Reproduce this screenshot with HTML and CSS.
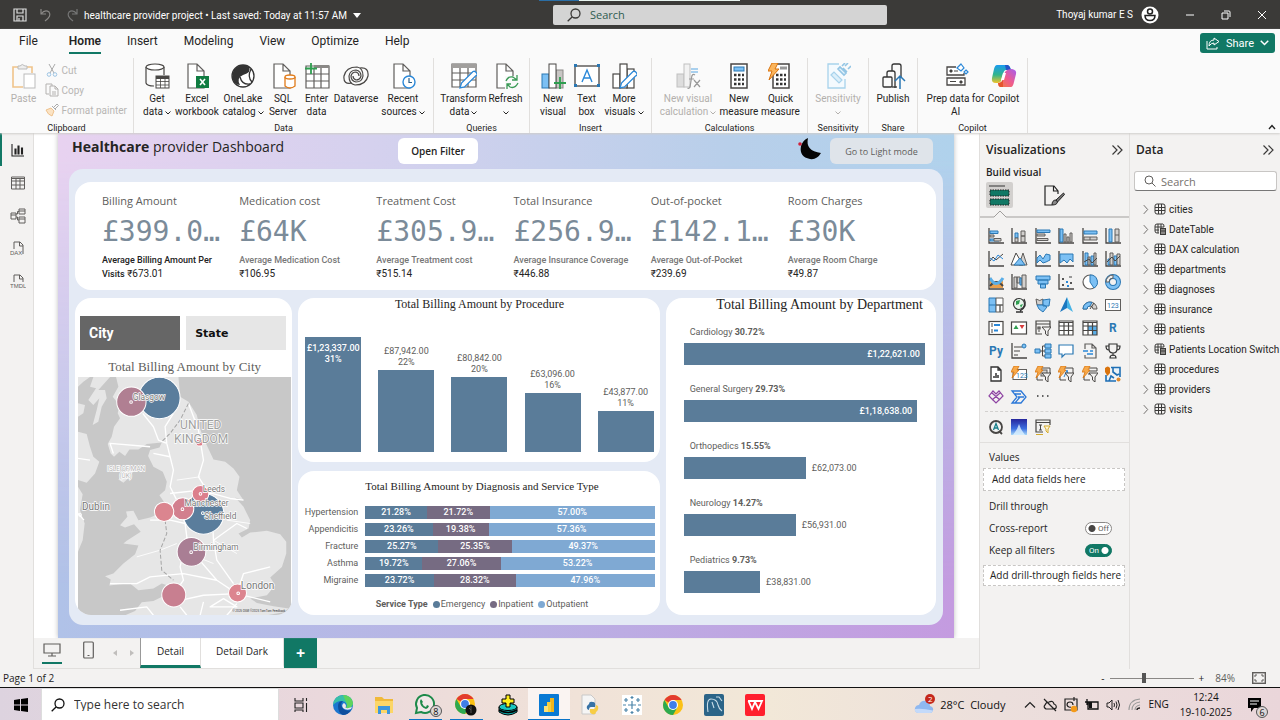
FILE: index.html
```html
<!DOCTYPE html>
<html lang="en">
<head>
<meta charset="utf-8">
<meta name="viewport" content="width=device-width, initial-scale=1">
<title>healthcare provider project</title>
<link rel="stylesheet" href="styles.css">
</head>
<body>
<svg class="defs" aria-hidden="true">
  <defs>
    <symbol id="ax" viewBox="0 0 16 16"><path d="M1 0V15H16" fill="none" stroke="#484644" stroke-width="1.3"/></symbol>
    <symbol id="bolt" viewBox="0 0 16 16"><path d="M3 0H8L6 4H8L1 12L3 6H0Z" fill="#f7a94a" stroke="#d9730d" stroke-width=".8"/></symbol>
    <symbol id="fun" viewBox="0 0 16 16"><path d="M7 7H16L13 11V16L10.500 14V11Z" fill="#f3f2f1" stroke="#484644"/></symbol>
    <symbol id="tbl" viewBox="0 0 12 12"><g fill="none" stroke="#3b3a39" stroke-width="1"><rect x="1" y="1" width="10" height="10" rx="2"/><path d="M4.500 1V11M7.500 1V11M1 4.500H11M1 7.500H11"/></g></symbol>
    <symbol id="tblc" viewBox="0 0 12 12"><g fill="none" stroke="#3b3a39" stroke-width="1"><path d="M5 10H3Q1 10 1 8V3Q1 1 3 1H9Q10 1 10 4M4 1V10M7 1V5M1 4H10M1 7H5"/><rect x="6.500" y="5.500" width="5" height="6" fill="#8a8886"/><path d="M6 8H12"/></g></symbol>
    <symbol id="chev" viewBox="0 0 8 12"><path d="M2 1L6.500 6L2 11" fill="none" stroke="#605e5c"/></symbol>
    <symbol id="dn" viewBox="0 0 6 4"><path d="M.5.5L3 3L5.500.5" fill="none" stroke="currentColor" stroke-width="1"/></symbol>
    <symbol id="dbl" viewBox="0 0 12 10"><path d="M1.500.5L6 5L1.500 9.500M6.500.5L11 5L6.500 9.500" fill="none" stroke="#3b3a39" stroke-width="1.200"/></symbol>
    <symbol id="mag" viewBox="0 0 14 14"><g fill="none" stroke="currentColor" stroke-width="1.300"><circle cx="8.500" cy="5.500" r="4.500"/><path d="M5.300 8.700L.7 13.300"/></g></symbol>
    <symbol id="doc" viewBox="0 0 26 26"><path d="M4 1H13L20 8V25H4ZM13 1V8H20" fill="#fff" stroke="#605e5c" stroke-width="1.200"/></symbol>
    <symbol id="pen" viewBox="0 0 26 26"><path d="M9 25L10.500 20L22 8.500Q24 7.500 25.500 10T24.500 13L13.500 24Z" fill="#fff" stroke="#2b88d8" stroke-width="1.300"/></symbol>
    <symbol id="chrome" viewBox="0 0 20 20"><circle cx="10" cy="10" r="10" fill="#fbc116"/><path d="M10 10L1.400 5A10 10 0 0 1 18.660 5L10 5Z" fill="#e33b2e"/><path d="M1.340 5A10 10 0 0 0 10 20L14.300 12.500L10 14L5.700 12.500Z" fill="#2da94f"/><circle cx="10" cy="10" r="5" fill="#fff"/><circle cx="10" cy="10" r="3.900" fill="#3f7ee8"/></symbol>
  </defs>
</svg>

<header class="titlebar">
  <div class="quick">
    <button aria-label="Save"><svg width="14" height="14" viewBox="0 0 14 14"><path d="M1 1H13V13H1ZM4 1V5H10V1M4 13V8H10V13M6 10V13" fill="none" stroke="#ddd" stroke-width="1.200"/></svg></button>
    <button aria-label="Undo"><svg width="14" height="14" viewBox="0 0 14 14"><path d="M2 1V6H7M2 6Q6 1 10 4Q13 8 6 13" fill="none" stroke="#8a8886" stroke-width="1.200"/></svg></button>
    <button aria-label="Redo"><svg width="14" height="14" viewBox="0 0 14 14"><path d="M12 1V6H7M12 6Q8 1 4 4Q1 8 8 13" fill="none" stroke="#777" stroke-width="1.200"/></svg></button>
    <button class="filename">healthcare provider project • Last saved: Today at 11:57 AM<svg width="8" height="5" viewBox="0 0 8 5"><path d="M0 0H8L4 5Z" fill="#fff"/></svg></button>
  </div>
  <label class="topsearch"><svg width="14" height="14"><use href="#mag"/></svg><input type="text" placeholder="Search" aria-label="Search"></label>
  <div class="account">
    <span>Thoyaj kumar E S</span>
    <svg width="18" height="18" viewBox="0 0 18 18"><circle cx="9" cy="9" r="8.500" fill="#fff"/><circle cx="9" cy="5.500" r="2.500" fill="none" stroke="#222" stroke-width="1.500"/><path d="M4 9.500H14Q14 14.500 9 14.500T4 9.500Z" fill="none" stroke="#222" stroke-width="1.500"/></svg>
    <button aria-label="Minimize"><svg width="10" height="10" viewBox="0 0 10 10"><path d="M1 5H9" stroke="#fff"/></svg></button>
    <button aria-label="Restore"><svg width="10" height="10" viewBox="0 0 10 10"><path d="M1 3H7V9H1ZM3 1H8Q9 1 9 2V7" fill="none" stroke="#fff"/></svg></button>
    <button aria-label="Close"><svg width="10" height="10" viewBox="0 0 10 10"><path d="M1 1L9 9M9 1L1 9" stroke="#fff"/></svg></button>
  </div>
  <i class="strip"></i>
</header>

<section class="ribbon">
  <nav class="tabs">
    <button class="t-file">File</button><button class="on">Home</button><button>Insert</button><button>Modeling</button><button>View</button><button>Optimize</button><button>Help</button>
    <button class="share"><svg width="14" height="13" viewBox="0 0 14 13"><path d="M1 4V12H11V10M8 1L13 4.500L8 8V6Q5 6 3 9Q3 3 8 3Z" fill="none" stroke="#fff"/></svg>Share<svg width="9" height="6"><use href="#dn"/></svg></button>
  </nav>
  <div class="groups">
    <div class="group g-clip">
      <div class="tools">
        <button class="tool off"><svg width="26" height="26" viewBox="0 0 26 26"><path d="M12 24H2V4H8M16 4H21V10" fill="none" stroke="#f0c48a" stroke-width="1.600"/><path d="M7 3H9Q11 0 14 3H16V6H7Z" fill="#eee" stroke="#bbb"/><rect x="13" y="11" width="11" height="14" fill="#fff" stroke="#bbb"/></svg><span>Paste</span></button>
        <div class="stack">
          <button><svg width="14" height="14" viewBox="0 0 14 14"><path d="M4 1L9 10M10 1L5 10" stroke="#aaa"/><circle cx="4" cy="11.500" r="1.800" fill="none" stroke="#9cc4e4"/><circle cx="10" cy="11.500" r="1.800" fill="none" stroke="#9cc4e4"/></svg>Cut</button>
          <button><svg width="14" height="14" viewBox="0 0 14 14"><path d="M4 11H1V1H7V3M5 3H10L13 6V13H5ZM10 3V6H13M7 9H11M7 11H11" fill="none" stroke="#b4b2b0"/></svg>Copy</button>
          <button><svg width="14" height="14" viewBox="0 0 14 14"><path d="M1 7L6 5L9 8L7 13Q3 12 1 7Z" fill="#fbe3c4" stroke="#eec28e"/><path d="M7 3L11 7M9 4L12 1L13.500 2.500L10 6" fill="none" stroke="#aaa"/></svg>Format painter</button>
        </div>
      </div>
      <p>Clipboard</p>
    </div>
    <div class="group g-data">
      <div class="tools">
        <button class="tool"><svg width="26" height="26" viewBox="0 0 26 26"><path d="M2 4V20Q3 23 10 23M20 4V12" fill="none" stroke="#484644" stroke-width="1.200"/><ellipse cx="11" cy="4" rx="9" ry="3" fill="#fff" stroke="#484644" stroke-width="1.200"/><rect x="12" y="13" width="13" height="12" fill="#fff" stroke="#484644"/><path d="M12 14.500H25" stroke="#484644" stroke-width="3"/><path d="M12 18.500H25M12 22H25M16.500 16V25M21 16V25" stroke="#484644" stroke-width=".8"/></svg><span>Get</span><span>data<svg><use href="#dn"/></svg></span></button>
        <button class="tool"><svg width="26" height="26" viewBox="0 0 26 26"><use href="#doc"/><rect x="12" y="13" width="13" height="12" fill="#107c41"/><path d="M16 16L21 22M21 16L16 22" stroke="#fff" stroke-width="1.600"/></svg><span>Excel</span><span>workbook</span></button>
        <button class="tool"><svg width="26" height="26" viewBox="0 0 26 26"><circle cx="13" cy="13" r="11" fill="#fff" stroke="#333" stroke-width="1.300"/><path d="M13 2Q3 3 2 14Q4 22 10 22Q6 15 13 12Q22 9 19 4Q16 2 13 2Z" fill="#333"/><path d="M10 14Q12 22 20 21M21 6Q17 14 22 19" fill="none" stroke="#333" stroke-width="1.300"/></svg><span>OneLake</span><span>catalog<svg><use href="#dn"/></svg></span></button>
        <button class="tool"><svg width="26" height="26" viewBox="0 0 26 26"><use href="#doc"/><path d="M15 14V23Q20 27 25 23V14" fill="#fff" stroke="#e07b1a" stroke-width="1.300"/><ellipse cx="20" cy="14" rx="5" ry="2" fill="#fff" stroke="#e07b1a" stroke-width="1.300"/></svg><span>SQL</span><span>Server</span></button>
        <button class="tool"><svg width="26" height="26" viewBox="0 0 26 26"><path d="M2 3H25V25H2ZM2 11H25M2 18H25M10 5V25M17 5V25" fill="#fff" stroke="#605e5c" stroke-width="1.200"/><path d="M10 3.500H25" stroke="#8a8886" stroke-width="3"/><path d="M7 0V11M1 5.500H13" stroke="#2f9e50" stroke-width="1.800"/></svg><span>Enter</span><span>data</span></button>
        <button class="tool"><svg width="26" height="26" viewBox="0 0 26 26"><g fill="none" stroke="#484644" stroke-width="1.200"><path d="M9 20Q0 22 1 13Q3 4 14 4Q20 5 20 13Q19 19 13 19Q8 18 8 13Q9 9 13 9Q16 10 16 13"/><path d="M17 5Q26 4 25 13Q23 22 12 22Q6 21 6 13Q7 7 13 7Q18 8 18 13Q17 17 13 17Q10 16 10 13"/></g></svg><span>Dataverse</span></button>
        <button class="tool"><svg width="26" height="26" viewBox="0 0 26 26"><use href="#doc"/><circle cx="19" cy="19" r="6" fill="#fff" stroke="#2b88d8" stroke-width="1.400"/><path d="M19 15V19.500H22" fill="none" stroke="#2b5f88" stroke-width="1.200"/></svg><span>Recent</span><span>sources<svg><use href="#dn"/></svg></span></button>
      </div>
      <p>Data</p>
    </div>
    <div class="group g-query">
      <div class="tools">
        <button class="tool"><svg width="26" height="26" viewBox="0 0 26 26"><path d="M1 1H25V24H1ZM1 10H25M1 17H25M9 5V24M17 5V24" fill="#fff" stroke="#605e5c" stroke-width="1.200"/><path d="M1 3H25" stroke="#a19f9d" stroke-width="4"/><use href="#pen"/></svg><span>Transform</span><span>data<svg><use href="#dn"/></svg></span></button>
        <button class="tool"><svg width="26" height="26" viewBox="0 0 26 26"><use href="#doc"/><rect x="12" y="13" width="14" height="13" fill="#fafafa"/><path d="M13 18Q15 13 20 14L24 17M24 12V17H19M25 20Q22 26 17 24L14 21M14 26V21H18" fill="none" stroke="#3a9a56" stroke-width="1.300"/></svg><span>Refresh</span><span><svg><use href="#dn"/></svg></span></button>
      </div>
      <p>Queries</p>
    </div>
    <div class="group g-insert">
      <div class="tools">
        <button class="tool"><svg width="26" height="26" viewBox="0 0 26 26"><rect x="2" y="11" width="7" height="14" fill="#7cc0f4" stroke="#2b78b4"/><rect x="16" y="7" width="7" height="18" fill="#c8c6c4" stroke="#8a8886"/><rect x="9" y="1" width="7" height="24" fill="#fff" stroke="#484644"/><path d="M20 14V26M14 20H26" stroke="#2f9e50" stroke-width="1.800"/></svg><span>New</span><span>visual</span></button>
        <button class="tool"><svg width="26" height="26" viewBox="0 0 26 26"><rect x="1" y="3" width="24" height="20" fill="#fff" stroke="#605e5c" stroke-width="1.500"/><path d="M8 19L13 7L18 19M10 15H16" fill="none" stroke="#2b88d8" stroke-width="1.400"/><path d="M0 1H3V4H0ZM23 1H26V4H23ZM0 21H3V24H0ZM23 21H26V24H23Z" fill="#2b78b4"/></svg><span>Text</span><span>box</span></button>
        <button class="tool"><svg width="26" height="26" viewBox="0 0 26 26"><g fill="#fff" stroke="#484644" stroke-width="1.200"><rect x="2" y="11" width="7" height="14"/><rect x="16" y="6" width="7" height="19"/><rect x="9" y="1" width="7" height="24"/></g><use href="#pen"/></svg><span>More</span><span>visuals<svg><use href="#dn"/></svg></span></button>
      </div>
      <p>Insert</p>
    </div>
    <div class="group g-calc">
      <div class="tools">
        <button class="tool off"><svg width="26" height="26" viewBox="0 0 26 26"><rect x="2" y="11" width="7" height="13" fill="#ddd" stroke="#c0c0c0"/><rect x="9" y="1" width="6" height="23" fill="#f2f2f2" stroke="#c0c0c0"/><path d="M16 6H23M16 9H23" stroke="#a9d0ee" stroke-width="2"/><path d="M20 12Q17 10 16.500 15L15 24Q14 26 12.500 25M14 16H19M19 17L25 24M25 17L19 24" fill="none" stroke="#999" stroke-width="1.200"/></svg><span>New visual</span><span>calculation<svg><use href="#dn"/></svg></span></button>
        <button class="tool"><svg width="26" height="26" viewBox="0 0 26 26"><rect x="5" y="1" width="16" height="24" fill="#fff" stroke="#484644" stroke-width="1.500"/><rect x="8" y="4" width="10" height="4" fill="#7cc0f4" stroke="#2b78b4"/><path d="M8 12H18M8 16.500H18M8 21H18" stroke="#333" stroke-width="2.500" stroke-dasharray="2.500 1.500"/></svg><span>New</span><span>measure</span></button>
        <button class="tool"><svg width="26" height="26" viewBox="0 0 26 26"><rect x="5" y="1" width="16" height="24" fill="#fff" stroke="#484644" stroke-width="1.500"/><path d="M12 5H19" stroke="#999" stroke-width="3"/><path d="M8 12H18M8 16.500H18M8 21H18" stroke="#333" stroke-width="2.500" stroke-dasharray="2.500 1.500"/><path d="M4 0H10L7 6H11L1 17L4 8H0Z" fill="#fbb55c" stroke="#d9730d"/></svg><span>Quick</span><span>measure</span></button>
      </div>
      <p>Calculations</p>
    </div>
    <div class="group g-sens">
      <div class="tools">
        <button class="tool off"><svg width="26" height="26" viewBox="0 0 26 26"><path d="M14 1H3V25H20V16" fill="#f4fafe" stroke="#a8d3ec" stroke-width="1.300"/><path d="M6 12L9 9L17 17L14 20Z" fill="#dceffa" stroke="#a8d3ec" stroke-width="1.200"/><path d="M13 6L19 12L21 10L15 4ZM18 5L22 9M20 3L23 0M23 6L26 3M17 3L20 0" fill="#e4f2fb" stroke="#93c5e4" stroke-width="1.600"/></svg><span>Sensitivity</span><span><svg><use href="#dn"/></svg></span></button>
      </div>
      <p>Sensitivity</p>
    </div>
    <div class="group g-share">
      <div class="tools">
        <button class="tool"><svg width="26" height="26" viewBox="0 0 26 26"><g fill="#fafafa" stroke="#333" stroke-width="1.300"><path d="M12 8V3Q12 1 14 1H19Q21 1 21 3V14M7 14V10Q7 8 9 8H13Q15 8 15 10V25"/><rect x="3" y="14" width="9" height="10" rx="1"/><path d="M12 24H17"/></g><path d="M20 26V13M15 18L20 13L25 18" fill="none" stroke="#2b78b4" stroke-width="1.500"/></svg><span>Publish</span></button>
      </div>
      <p>Share</p>
    </div>
    <div class="group g-cop">
      <div class="tools">
        <button class="tool"><svg width="26" height="26" viewBox="0 0 26 26"><path d="M13 4H4V12H21V10M4 15H22V22H4Z" fill="#fff" stroke="#484644" stroke-width="1.300"/><path d="M7 7H9V9H7ZM17 18H19V20H17ZM11 8H15M7 18.500H13" fill="#333" stroke="#484644"/><path d="M18 1L21 5L18 8L14 5ZM23 7L25 9L23 11L21 9Z" fill="#fff" stroke="#2b88d8" stroke-width="1.200"/></svg><span>Prep data for</span><span>AI</span></button>
        <button class="tool"><svg width="26" height="26" viewBox="0 0 26 26"><defs><linearGradient id="cpa" x1="0" y1="0" x2="0" y2="1"><stop offset="0" stop-color="#1a9bf0"/><stop offset=".55" stop-color="#32b58a"/><stop offset="1" stop-color="#f0c429"/></linearGradient><linearGradient id="cpb" x1="1" y1="0" x2="0" y2="1"><stop offset="0" stop-color="#a45cf0"/><stop offset=".5" stop-color="#ee5b8e"/><stop offset="1" stop-color="#f5813a"/></linearGradient></defs><path d="M6 2H17Q19 3 20 7L15 7Q13 7 12 11L10 18Q9 20 5 20Q0 20 1 15L3 6Q4 2 6 2Z" fill="url(#cpa)"/><path d="M14 2H17Q19 3 20 7H15Z" fill="#2555c8"/><path d="M20 24H9Q7 22 7 20Q11 20 12 16L14 9Q16 6 21 6Q26 7 25 11L23 19Q22 24 20 24Z" fill="url(#cpb)"/><path d="M7 20Q11 20 12 16L12 24H9Q7 23 7 20Z" fill="#e4552e"/><path d="M12 10H15L13 17H10Z" fill="#fff"/></svg><span>Copilot</span></button>
      </div>
      <p>Copilot</p>
    </div>
    <button class="collapse" aria-label="Collapse ribbon"><svg width="8" height="6" viewBox="0 0 8 6"><path d="M1 5L4 1.500L7 5" fill="none" stroke="#222" stroke-width="1.400"/></svg></button>
  </div>
</section>

<main class="work">
  <nav class="rail">
    <button class="on" aria-label="Report view"><svg width="14" height="14" viewBox="0 0 14 14"><path d="M1 1V13H13M4 11V6H5V11ZM7 11V3H8V11ZM10.500 11V5H11.500V11Z" fill="none" stroke="#222" stroke-width="1.100"/></svg></button>
    <button aria-label="Table view"><svg width="14" height="14" viewBox="0 0 14 14"><path d="M.5 1H13.500V13H.5ZM.5 5H13.500M.5 9H13.500M5 3V13M9 3V13M1 2.500H13" fill="none" stroke="#605e5c"/></svg></button>
    <button aria-label="Model view"><svg width="16" height="16" viewBox="0 0 16 16"><path d="M1 5H6V11H1ZM9 1H15V6H9ZM9 9H15V15H9ZM1 7H6M9 3H15M9 11H15M6 6H7.500V3.500H9M6 9H7.500V12H9" fill="none" stroke="#605e5c"/></svg></button>
    <button aria-label="DAX query view"><svg width="16" height="18" viewBox="0 0 16 18"><path d="M4 9V2H10L13 5V14M9.500 2V6H13" fill="none" stroke="#605e5c"/><text x="0" y="15" class="mini">DAX</text></svg></button>
    <button aria-label="TMDL view"><svg width="16" height="18" viewBox="0 0 16 18"><path d="M4 9V2H10L13 5V9M9.500 2V6H13" fill="none" stroke="#605e5c"/><text x="0" y="15" class="mini">TMDL</text></svg></button>
  </nav>

  <section class="canvas">
    <div class="page">
      <div class="pagehead">
        <h1><b>Healthcare</b> provider Dashboard</h1>
        <button class="openf">Open Filter</button>
        <svg class="moon" width="24" height="22" viewBox="0 0 24 22"><path d="M10 0Q7 13 23 15Q19 22 12 21Q1 19 3 8Q5 2 10 0Z" fill="#050505"/><circle cx="2" cy="6" r="1.800" fill="#d0203a"/></svg>
        <button class="light">Go to Light mode</button>
      </div>
      <div class="panel">
        <section class="card kpis">
          <div class="strong"><h2>Billing Amount</h2><output>£399.0…</output><p><b>Average Billing Amount Per</b></p><p><b>Visits</b> ₹673.01</p></div>
          <div><h2>Medication cost</h2><output>£64K</output><p><b>Average Medication Cost</b></p><p>₹106.95</p></div>
          <div><h2>Treatment Cost</h2><output>£305.9…</output><p><b>Average Treatment cost</b></p><p>₹515.14</p></div>
          <div><h2>Total Insurance</h2><output>£256.9…</output><p><b>Average Insurance Coverage</b></p><p>₹446.88</p></div>
          <div><h2>Out-of-pocket</h2><output>£142.1…</output><p><b>Average Out-of-Pocket</b></p><p>₹239.69</p></div>
          <div><h2>Room Charges</h2><output>£30K</output><p><b>Average Room Charge</b></p><p>₹49.87</p></div>
        </section>
        <section class="card mapcard">
          <div class="switch"><button class="city">City</button><button class="state">State</button></div>
          <h3>Total Billing Amount by City</h3>
          <svg class="map" viewBox="24 261 639 714" preserveAspectRatio="xMidYMid slice" role="img" aria-label="Map of billing by city">
            <rect x="24" y="261" width="639" height="714" fill="#c8c8c8"/>
            <g fill="#e6e6e6">
              <path d="M138 261L145 290L128 320L148 345L143 370L150 385L132 410L125 440L113 462L122 490L132 500L148 485L165 498L178 478L205 478L230 462L275 457L268 472L240 480L234 498L250 530L278 545L290 575L285 600L268 615L285 640L275 668L240 682L205 690L190 662L168 664L172 680L150 705L165 712L192 702L212 725L170 752L160 760L205 766L195 792L160 820L130 850L105 858L122 868L118 886L150 882L180 880L205 900L250 895L275 880L300 888L285 915L250 932L215 936L195 962L165 975H590L640 966L655 955L610 948L560 938L540 925L590 915L615 885L600 862L635 830L648 790L648 755L630 732L590 722L540 727L515 742L505 730L535 715L540 690L520 650L495 622L520 630L500 600L508 560L490 535L465 515L430 508L412 470L398 440L388 410L380 375L355 335L330 320L325 261Z"/>
              <path d="M24 425L50 432L60 470L70 500L88 515L75 550L50 578L24 570ZM24 590L38 612L30 660L44 700L38 750L24 785ZM145 568L165 545L198 530L180 560L160 578ZM85 300L120 261H70L60 290L78 295L55 330L70 345L88 325L80 360L68 405L85 395L95 350L110 325L105 300ZM24 340L45 345L40 370L24 380ZM24 261H60L40 275L24 290Z"/>
            </g>
            <g fill="none" stroke="#fff" stroke-width="4" stroke-linejoin="round">
              <path d="M218 370L250 410L265 450L290 460L300 500L310 540L300 590L320 630L345 700L350 740L380 800L440 870L500 910M290 460L285 410L310 370M355 340L385 420L400 510L385 560L410 600L425 650L430 750L440 810L490 880M300 610L390 600L480 625L520 630M345 700L300 690L240 690M350 740L330 830L340 870L320 900M310 935L400 915L500 910L600 935M340 850L440 870M330 950L350 975M400 935L390 975M500 940L470 975M500 910L520 850L600 830M430 750L500 700L530 715M130 490L120 460L240 470M120 880L200 880L240 860L340 850M24 505L60 510M24 670L42 690M250 490L300 500M150 960L230 950L250 975M460 925L420 950L500 950Z"/>
              <path d="M320 570L390 560M470 690L540 700M430 750L500 790M200 800L270 780L320 760M380 800L430 820" stroke-width="2.500"/>
            </g>
            <path d="M355 340L330 390L300 430L275 455M285 690L290 730L270 780L275 840L310 870" fill="none" stroke="#a5a5a5" stroke-width="3" stroke-dasharray="12 6"/>
            <g stroke="#fff" stroke-width="3">
              <circle cx="268" cy="324" r="62" fill="#5a7d9c"/><circle cx="184" cy="335" r="44" fill="#b07f92"/>
              <circle cx="388" cy="457" r="11" fill="#dc7f88"/><circle cx="400" cy="671" r="61" fill="#5a7d9c"/>
              <circle cx="391" cy="611" r="25" fill="#dc7f8c"/><circle cx="338" cy="656" r="33" fill="#d27f8e"/><circle cx="282" cy="665" r="29" fill="#db858f"/>
              <circle cx="364" cy="785" r="43" fill="#a97e94"/><circle cx="311" cy="914" r="36" fill="#c87f90"/><circle cx="502" cy="908" r="27" fill="#dc858f"/>
            </g>
            <g fill="none" stroke="#fff" stroke-width="3"><circle cx="183" cy="336" r="4"/><circle cx="391" cy="611" r="4"/><circle cx="337" cy="657" r="4"/><circle cx="398" cy="669" r="4"/><circle cx="363" cy="786" r="4"/><circle cx="504" cy="909" r="4"/><circle cx="30" cy="674" r="4"/></g>
            <g class="places">
              <text x="188" y="329">Glasgow</text><text x="398" y="605">Leeds</text><text x="343" y="648">Manchester</text><text x="402" y="688">Sheffield</text><text x="370" y="778">Birmingham</text>
              <text x="512" y="897" class="big">London</text><text x="36" y="660" class="big">Dublin</text>
              <text x="330" y="417" class="uk">UNITED</text><text x="312" y="458" class="uk">KINGDOM</text>
              <text x="112" y="543" class="isle">ISLE OF MAN</text><text x="148" y="563" class="isle">(UK)</text>
              <text x="486" y="966" class="copy">© 2025 OSM ©2025 TomTom Feedback</text>
            </g>
          </svg>
        </section>
        <div class="middle">
          <section class="card proc">
            <h3>Total Billing Amount by Procedure</h3>
            <div class="cols">
              <div class="in"><i style="height:115px"><span>£1,23,337.00<br>31%</span></i></div>
              <div><span>£87,942.00<br>22%</span><i style="height:82px"></i></div>
              <div><span>£80,842.00<br>20%</span><i style="height:75px"></i></div>
              <div><span>£63,096.00<br>16%</span><i style="height:59px"></i></div>
              <div><span>£43,877.00<br>11%</span><i style="height:41px"></i></div>
            </div>
          </section>
          <section class="card diag">
            <h3>Total Billing Amount by Diagnosis and Service Type</h3>
            <div class="rows">
              <span>Hypertension</span><div><i class="e" style="width:21.28%">21.28%</i><i class="n" style="width:21.72%">21.72%</i><i class="o" style="width:57%">57.00%</i></div>
              <span>Appendicitis</span><div><i class="e" style="width:23.26%">23.26%</i><i class="n" style="width:19.38%">19.38%</i><i class="o" style="width:57.36%">57.36%</i></div>
              <span>Fracture</span><div><i class="e" style="width:25.27%">25.27%</i><i class="n" style="width:25.35%">25.35%</i><i class="o" style="width:49.37%">49.37%</i></div>
              <span>Asthma</span><div><i class="e" style="width:19.72%">19.72%</i><i class="n" style="width:27.06%">27.06%</i><i class="o" style="width:53.22%">53.22%</i></div>
              <span>Migraine</span><div><i class="e" style="width:23.72%">23.72%</i><i class="n" style="width:28.32%">28.32%</i><i class="o" style="width:47.96%">47.96%</i></div>
            </div>
            <div class="legend"><b>Service Type</b><span><i class="e"></i>Emergency</span><span><i class="n"></i>Inpatient</span><span><i class="o"></i>Outpatient</span></div>
          </section>
        </div>
        <section class="card dept">
          <h3>Total Billing Amount by Department</h3>
          <div class="drow"><p>Cardiology <b>30.72%</b></p><div><i style="width:100%">£1,22,621.00</i></div></div>
          <div class="drow"><p>General Surgery <b>29.73%</b></p><div><i style="width:96.75%">£1,18,638.00</i></div></div>
          <div class="drow"><p>Orthopedics <b>15.55%</b></p><div><i style="width:50.62%"></i><span>£62,073.00</span></div></div>
          <div class="drow"><p>Neurology <b>14.27%</b></p><div><i style="width:46.43%"></i><span>£56,931.00</span></div></div>
          <div class="drow"><p>Pediatrics <b>9.73%</b></p><div><i style="width:31.67%"></i><span>£38,831.00</span></div></div>
        </section>
      </div>
    </div>
    <div class="sheets">
      <button class="view on" aria-label="Desktop layout"><svg width="18" height="14" viewBox="0 0 18 14"><path d="M1 1H17V10H1ZM9 10V13M5 13H13" fill="none" stroke="#605e5c" stroke-width="1.200"/></svg></button>
      <button class="view" aria-label="Mobile layout"><svg width="11" height="18" viewBox="0 0 11 18"><rect x=".7" y="1" width="9.600" height="16" rx="1" fill="none" stroke="#605e5c" stroke-width="1.200"/><path d="M4.500 14.500H6.500" stroke="#605e5c"/></svg></button>
      <button class="nudge" aria-label="Previous page"><svg width="4" height="6" viewBox="0 0 4 6"><path d="M4 0V6L0 3Z" fill="#c0bebc"/></svg></button>
      <button class="nudge" aria-label="Next page"><svg width="4" height="6" viewBox="0 0 4 6"><path d="M0 0V6L4 3Z" fill="#c0bebc"/></svg></button>
      <button class="sheet on">Detail</button><button class="sheet wide">Detail Dark</button><button class="add">+</button>
    </div>
  </section>

  <aside class="viz">
    <div class="phead"><h2>Visualizations</h2><button aria-label="Collapse"><svg width="12" height="10"><use href="#dbl"/></svg></button></div>
    <p class="build">Build visual</p>
    <div class="modes">
      <button class="on" aria-label="Build visual"><svg width="21" height="21" viewBox="0 0 21 21"><path d="M0 1H16" stroke="#333"/><path d="M1 5H20V11H1ZM1 14H20V20H1Z" fill="#117865" stroke="#222" stroke-dasharray="1.500 1"/></svg></button>
      <button aria-label="Format visual"><svg width="22" height="21" viewBox="0 0 22 21"><path d="M8 20H1V1H10L14 6V9M9.500 1V6H14" fill="none" stroke="#222" stroke-width="1.200"/><path d="M19.500 8L12 15L13.500 17L20.500 9.500Z" fill="#777" stroke="#222"/><path d="M12 15Q8 15 8 20Q13 20 13.500 17Z" fill="#888" stroke="#222"/></svg></button>
    </div>
    <svg class="notch" width="100%" height="8"><path d="M0 7H14L20 1L26 7H400" fill="none" stroke="#a19f9d"/></svg>
    <div class="vgrid">
      <button aria-label="Stacked bar chart"><svg viewBox="0 0 16 16"><use href="#ax"/><path d="M2 3H10V5.500H2ZM2 11H11V13H2Z" class="b"/><path d="M2 7H6V9H2ZM6 10.500H13V13H6Z" class="g"/></svg></button>
      <button aria-label="Stacked column chart"><svg viewBox="0 0 16 16"><use href="#ax"/><path d="M4 5H7V10H4Z" class="b"/><path d="M4 10H7V14H4ZM10 8H14V14H10ZM10 3H14V8H10Z" class="g"/></svg></button>
      <button aria-label="Clustered bar chart"><svg viewBox="0 0 16 16"><use href="#ax"/><path d="M2 2H15V4.500H2Z" class="b"/><path d="M2 6H10V8H2ZM2 10.500H13V12.500H2Z" class="g"/></svg></button>
      <button aria-label="Clustered column chart"><svg viewBox="0 0 16 16"><use href="#ax"/><path d="M2 1H5V14H2Z" class="b"/><path d="M6 6H8V14H6ZM9 9H11V14H9ZM12 5H14V14H12Z" class="g"/></svg></button>
      <button aria-label="100% stacked bar chart"><svg viewBox="0 0 16 16"><use href="#ax"/><path d="M2 3H15V6H2Z" class="b"/><path d="M2 9H15V12H2ZM8 9V12" class="g"/></svg></button>
      <button aria-label="100% stacked column chart"><svg viewBox="0 0 16 16"><use href="#ax"/><path d="M4 1H7V14H4Z" class="b"/><path d="M10 1H14V14H10ZM10 7H14" class="g"/></svg></button>

      <button aria-label="Line chart"><svg viewBox="0 0 16 16"><use href="#ax"/><path d="M2 10L5 6L8 9L15 3" class="k"/><path d="M2 7L6 10L10 4L15 8" class="l"/></svg></button>
      <button aria-label="Area chart"><svg viewBox="0 0 16 16"><path d="M8 14L12 2L16 14Z" class="g"/><path d="M0 14L5 2L12 14Z" fill="#fff" stroke="#484644"/><path d="M3 14L9 7L14 14Z" class="b"/></svg></button>
      <button aria-label="Stacked area chart"><svg viewBox="0 0 16 16"><use href="#ax"/><path d="M2 7L5 4L8 8L11 3L15 4V9L11 11L8 12L5 9L2 12Z" class="b"/></svg></button>
      <button aria-label="100% area chart"><svg viewBox="0 0 16 16"><use href="#ax"/><path d="M2 3H15V11L12 8L9 12L6 9L2 12Z" class="b"/></svg></button>
      <button aria-label="Line and stacked column chart"><svg viewBox="0 0 16 16"><use href="#ax"/><path d="M3 2H6V14H3ZM9 5H12V14H9Z" class="b"/><path d="M6 6H8V14H6ZM12 2H14V14H12Z" class="g"/><path d="M2 11L7 8L10 12L15 7" class="k"/></svg></button>
      <button aria-label="Line and clustered column chart"><svg viewBox="0 0 16 16"><use href="#ax"/><path d="M3 8H6V14H3ZM9 5H12V14H9Z" class="b"/><path d="M5 2H8V14H5ZM12 3H15V14H12Z" class="g"/><path d="M2 11L7 6L10 10L15 5" class="k"/></svg></button>

      <button aria-label="Ribbon chart"><svg viewBox="0 0 16 16"><path d="M2 3Q8 15 15 4V14H2Z" fill="#e9a04e"/><path d="M2 12Q8 4 15 12" fill="none" stroke="#484644" stroke-width="2"/><path d="M2 4Q8 15 15 4" fill="none" stroke="#5aaee8" stroke-width="3"/><use href="#ax"/></svg></button>
      <button aria-label="Waterfall chart"><svg viewBox="0 0 16 16"><use href="#ax"/><path d="M3 3H6V14H3ZM6 3H9V9H6Z" class="g"/><path d="M9 4H11V11H9Z" class="b"/><path d="M11 1H15V14H11Z" class="g"/></svg></button>
      <button aria-label="Funnel"><svg viewBox="0 0 16 16"><path d="M1 2H15V6H1ZM3 6H13V10H3ZM5.500 10H10.500V14H5.500Z" class="b"/></svg></button>
      <button aria-label="Scatter chart"><svg viewBox="0 0 16 16"><use href="#ax"/><path d="M4 4H6V6H4ZM4 10H6V12H4ZM12 8H14V10H12Z" fill="#555"/><path d="M8 7H10V9H8ZM9 11H11V13H9Z" fill="#2b88d8"/><path d="M11 2H14V4H11Z" fill="#999"/></svg></button>
      <button aria-label="Pie chart"><svg viewBox="0 0 16 16"><circle cx="8" cy="8" r="7" fill="#fff" stroke="#605e5c" stroke-width="1.200"/><path d="M8 1A7 7 0 0 1 12 14L8 8Z" class="b"/></svg></button>
      <button aria-label="Donut chart"><svg viewBox="0 0 16 16"><circle cx="8" cy="8" r="5.500" fill="none" stroke="#2b78b4" stroke-width="5"/><circle cx="8" cy="8" r="5.500" fill="none" stroke="#7cc0f4" stroke-width="3"/><path d="M8 1A7 7 0 0 0 1 8H4A4 4 0 0 1 8 4Z" fill="#eee" stroke="#605e5c"/></svg></button>

      <button aria-label="Treemap"><svg viewBox="0 0 16 16"><path d="M1 1H8V15H1Z" class="b"/><path d="M8 1H15V8H8ZM8 8H12V15H8ZM12 8H15V15H12Z" fill="#fff" stroke="#605e5c"/><path d="M1 8H8" stroke="#2b78b4"/></svg></button>
      <button aria-label="Map"><svg viewBox="0 0 16 16"><circle cx="8" cy="7" r="5.500" fill="#eaf6ee" stroke="#333" stroke-width="1.200"/><path d="M5 4L9 3L8 7L5 8ZM9 8L12 7L10 11Z" fill="#2f9e50"/><path d="M13 2Q17 9 9 14M5 15H12" fill="none" stroke="#333" stroke-width="1.300"/></svg></button>
      <button aria-label="Filled map"><svg viewBox="0 0 16 16"><path d="M1 2Q5 5 8 2L8 8H2Z" class="g"/><path d="M8 3L15 2L14 9H8ZM2 8H9L12 10L8 15L4 12Z" class="b"/></svg></button>
      <button aria-label="Azure map"><svg viewBox="0 0 16 16"><path d="M9 0L2 15L9 11Z" fill="#1c78c0"/><path d="M9 0L15 15L9 11Z" fill="#47b4e6"/></svg></button>
      <button aria-label="Gauge"><svg viewBox="0 0 16 16"><path d="M1 12A7 7 0 0 1 15 12H11A3 3 0 0 0 5 12Z" class="g"/><path d="M1 12A7 7 0 0 1 10 5.300L8 9Q5 9 5 12Z" class="b"/><path d="M8 12L12 6" class="k"/></svg></button>
      <button aria-label="Card"><svg viewBox="0 0 16 16"><rect x=".5" y="2.500" width="15" height="11" fill="#fff" stroke="#605e5c"/><text x="2" y="11" class="num">123</text></svg></button>

      <button aria-label="Multi-row card"><svg viewBox="0 0 16 16"><rect x="1" y="1.500" width="14" height="13" fill="#fff" stroke="#484644" stroke-width="1.200"/><path d="M4 3V7M4 9V13" class="k"/><path d="M6 5H12M6 10.500H10" stroke="#2b88d8" stroke-width="2"/></svg></button>
      <button aria-label="KPI"><svg viewBox="0 0 16 16"><rect x=".5" y="2" width="15" height="12" fill="#fff" stroke="#484644" stroke-width="1.200"/><path d="M2.500 9L5 5L7.500 9Z" fill="#2f9e50"/><path d="M8.500 5H13.500L11 9Z" fill="#d83b3b"/></svg></button>
      <button aria-label="Slicer"><svg viewBox="0 0 16 16"><path d="M7 14H1V1H15V7M1 4H15M3 7H5V9H3ZM3 11H5" fill="none" stroke="#484644" stroke-width="1.200"/><use href="#fun"/></svg></button>
      <button aria-label="Table"><svg viewBox="0 0 16 16"><path d="M1 1H15V15H1ZM1 6H15M1 10.500H15M6 2V15M10.500 2V15M1 2.500H15" fill="#fff" stroke="#484644" stroke-width="1.200"/></svg></button>
      <button aria-label="Matrix"><svg viewBox="0 0 16 16"><rect x="1" y="1" width="14" height="14" fill="#fff"/><path d="M6 6H15V10H6ZM10 10H15V15H10Z" fill="#5aaee8"/><path d="M1 1H15V15H1ZM1 6H15M1 10.500H15M6 2V15M10.500 2V15M1 2.500H15" fill="none" stroke="#484644" stroke-width="1.200"/></svg></button>
      <button class="word" aria-label="R script visual">R</button>

      <button class="word" aria-label="Python visual">Py</button>
      <button aria-label="Key influencers"><svg viewBox="0 0 16 16"><use href="#ax"/><path d="M3 4H11M3 8H9M3 12H7" class="k"/><circle cx="13" cy="3" r="2" class="b"/></svg></button>
      <button aria-label="Decomposition tree"><svg viewBox="0 0 16 16"><path d="M0 6H5V10H0ZM10 1H16V5H10ZM10 6H16V10H10ZM10 11H16V15H10Z" class="b"/><path d="M5 8H10M7.500 3V13M7.500 3H10M7.500 13H10" class="k"/></svg></button>
      <button aria-label="Q&amp;A"><svg viewBox="0 0 16 16"><path d="M1 2H15V11H7L4 14V11H1Z" fill="#fff" stroke="#2b78b4" stroke-width="1.200"/></svg></button>
      <button aria-label="Narrative"><svg viewBox="0 0 16 16"><path d="M3 6V1H10L14 5V15H3V12M10 1V5H14" fill="none" stroke="#605e5c" stroke-width="1.200"/><path d="M1 8H6M5 11H11M8 8H11" stroke="#2b88d8" stroke-width="1.500"/></svg></button>
      <button aria-label="Goals"><svg viewBox="0 0 16 16"><path d="M4 1H12V6Q12 10 8 10T4 6ZM4 3H1Q1 7 4 7M12 3H15Q15 7 12 7M8 10V13M5 15Q5 12 8 12T11 15Z" fill="none" stroke="#333" stroke-width="1.200"/></svg></button>

      <button aria-label="Paginated report"><svg viewBox="0 0 16 16"><path d="M3 1H10L13 4V15H3ZM10 1V4H13" fill="#fff" stroke="#333" stroke-width="1.300"/><path d="M6 12V10M8 12V7M10 12V9" stroke="#333" stroke-width="1.500"/></svg></button>
      <button aria-label="Card (new)"><svg viewBox="0 0 16 16"><rect x="2" y="3.500" width="13.500" height="10" fill="#fff" stroke="#605e5c"/><text x="5" y="12" class="num">123</text><use href="#bolt"/></svg></button>
      <button aria-label="Button slicer"><svg viewBox="0 0 16 16"><path d="M4 2H15V7M2 10V14H8" class="k"/><rect x="6" y="4" width="6" height="6" class="g"/><use href="#bolt"/><use href="#fun"/></svg></button>
      <button aria-label="Text slicer"><svg viewBox="0 0 16 16"><path d="M4 2H15V7M2 10V14H8" class="k"/><path d="M6 11L9 4L10 8" class="l"/><use href="#bolt"/><use href="#fun"/></svg></button>
      <button aria-label="List slicer"><svg viewBox="0 0 16 16"><path d="M7 2H15V5H7M2 10V14H8M6 8H9" class="k"/><use href="#bolt"/><use href="#fun"/></svg></button>
      <button aria-label="ArcGIS"><svg viewBox="0 0 16 16"><path d="M6 1.500H15V11M8 2V6L12 9L14 8M1 9V15H11M4 15L6 10L9 12" fill="#e6f2fb" stroke="#1f6fb5" stroke-width="1.600"/><path d="M0 2Q3-1 5 2V7L2.500 10L0 6Z" fill="#d9730d"/><circle cx="13.500" cy="13.500" r="2" fill="#e08a2e"/></svg></button>

      <button aria-label="Power Apps"><svg viewBox="0 0 16 16"><path d="M5 2L8 5L11 2L15 7L12 10L8 14L4 10L1 7L5 2ZM4 4L12 11M12 4L4 11" fill="none" stroke="#8e44a3" stroke-width="1.200"/></svg></button>
      <button aria-label="Power Automate"><svg viewBox="0 0 16 16"><path d="M1 2H10L15 8L10 14H1L6 8ZM4 5H10M9 8L4 14M7 8L13 8" fill="none" stroke="#2b78d8" stroke-width="1.300"/></svg></button>
      <button aria-label="More visuals"><svg viewBox="0 0 16 16"><path d="M2 7H3.500M7 7H8.500M12 7H13.500" stroke="#333" stroke-width="1.300"/></svg></button>
    </div>
    <div class="vgrid custom">
      <button aria-label="Custom visual A"><svg viewBox="0 0 16 16"><circle cx="8" cy="8" r="6" fill="none" stroke="#484644" stroke-width="1.800"/><path d="M5.500 11L8 4.500L10.500 11M6.500 9H9.500" fill="none" stroke="#177f8a" stroke-width="1.300"/><path d="M11 12L14 15" stroke="#484644" stroke-width="1.800"/></svg></button>
      <button aria-label="Custom visual B"><svg viewBox="0 0 16 16"><defs><linearGradient id="sky" x1="0" y1="0" x2="0" y2="1"><stop offset="0" stop-color="#26269c"/><stop offset=".6" stop-color="#3d6fe0"/><stop offset="1" stop-color="#a8d8f8"/></linearGradient></defs><rect width="16" height="16" fill="url(#sky)"/><path d="M8 5L10 10L14 16H2L6 10Z" fill="#dff2ff" opacity=".8"/></svg></button>
      <button aria-label="Custom visual C"><svg viewBox="0 0 16 16"><path d="M8 13H1V1H15V6M1 3.500H15" fill="none" stroke="#484644" stroke-width="1.200"/><path d="M4 6H7M5.500 6V11M4 11H7" class="k"/><path d="M9 7H15L13 10V14L11 12V10ZM1 15.500H8" fill="#fff7dc" stroke="#d3a92a"/></svg></button>
    </div>
    <div class="wells">
      <p>Values</p>
      <div class="well">Add data fields here</div>
      <p class="semi">Drill through</p>
      <label class="tog">Cross-report<span class="sw"><input type="checkbox"><em>Off</em></span></label>
      <label class="tog">Keep all filters<span class="sw"><input type="checkbox" checked><em>On</em></span></label>
      <div class="well drill">Add drill-through fields here</div>
    </div>
  </aside>

  <aside class="data">
    <div class="phead"><h2>Data</h2><button aria-label="Collapse"><svg width="12" height="10"><use href="#dbl"/></svg></button></div>
    <label class="dsearch"><svg width="12" height="12" viewBox="0 0 12 12"><path d="M8 8L11.500 11.500" stroke="#605e5c"/><circle cx="5" cy="5" r="4" fill="none" stroke="#605e5c"/></svg><input type="text" placeholder="Search" aria-label="Search fields"></label>
    <ul>
      <li><svg class="c"><use href="#chev"/></svg><svg class="t"><use href="#tbl"/></svg>cities</li>
      <li><svg class="c"><use href="#chev"/></svg><svg class="t"><use href="#tblc"/></svg>DateTable</li>
      <li><svg class="c"><use href="#chev"/></svg><svg class="t"><use href="#tbl"/></svg>DAX calculation</li>
      <li><svg class="c"><use href="#chev"/></svg><svg class="t"><use href="#tbl"/></svg>departments</li>
      <li><svg class="c"><use href="#chev"/></svg><svg class="t"><use href="#tbl"/></svg>diagnoses</li>
      <li><svg class="c"><use href="#chev"/></svg><svg class="t"><use href="#tbl"/></svg>insurance</li>
      <li><svg class="c"><use href="#chev"/></svg><svg class="t"><use href="#tbl"/></svg>patients</li>
      <li><svg class="c"><use href="#chev"/></svg><svg class="t"><use href="#tblc"/></svg>Patients Location Switch</li>
      <li><svg class="c"><use href="#chev"/></svg><svg class="t"><use href="#tbl"/></svg>procedures</li>
      <li><svg class="c"><use href="#chev"/></svg><svg class="t"><use href="#tbl"/></svg>providers</li>
      <li><svg class="c"><use href="#chev"/></svg><svg class="t"><use href="#tbl"/></svg>visits</li>
    </ul>
  </aside>
</main>

<footer class="status">
  <span>Page 1 of 2</span>
  <div class="zoom"><button aria-label="Zoom out">-</button><input type="range" min="0" max="100" value="41" aria-label="Zoom"><button aria-label="Zoom in">+</button><span>84%</span><button aria-label="Fit to page"><svg width="14" height="12" viewBox="0 0 14 12"><rect x=".7" y=".7" width="12.600" height="10.600" fill="none" stroke="#605e5c" stroke-width="1.400"/><path d="M3 5V3H5M9 3H11V5M11 7V9H9M5 9H3V7" fill="none" stroke="#605e5c"/></svg></button></div>
</footer>

<div class="taskbar">
  <button class="start" aria-label="Start"><svg width="14" height="14" viewBox="0 0 14 14"><path d="M0 2L6 1V6.500H0ZM7 .9L14 0V6.500H7ZM0 7.500H6V13L0 12ZM7 7.500H14V14L7 13Z" fill="#000"/></svg></button>
  <label class="wsearch"><svg width="14" height="14"><use href="#mag"/></svg><input type="text" placeholder="Type here to search" aria-label="Type here to search"></label>
  <button class="tview" aria-label="Task view"><svg width="14" height="14" viewBox="0 0 14 14"><path d="M1 0V3H9V0M1 5H9V10H1ZM1 14V12H9V14M12.500 0V3M12.500 5V14" fill="none" stroke="#222" stroke-width="1.100"/></svg></button>
  <div class="apps">
    <button aria-label="Edge"><svg width="20" height="22" viewBox="0 0 20 20"><circle cx="10" cy="10" r="10" fill="#1b76cf"/><path d="M0 10Q1 0 11 0Q20 1 20 9Q19 14 13 13Q15 10 12 7Q6 4 0 10Z" fill="#39c0a8"/><path d="M10 0Q18 0 20 8Q19 14 13 13Q15 10 13 7Z" fill="#5fd35c"/><path d="M5 11Q5 6 10 6Q7 9 9 12Q12 17 18 15Q15 20 10 20Q5 18 5 11Z" fill="#0e4f9e"/><path d="M11 8Q8 10 10 13Q13 16 18 14L19 12Q14 14 12.500 12.500Q14 10 11 8Z" fill="#f0e8ea"/></svg></button>
    <button aria-label="File Explorer"><svg width="20" height="20" viewBox="0 0 20 20"><path d="M1 2H8L10 4H19V18H1Z" fill="#f0b93a"/><path d="M1 6H19V18H1Z" fill="#fcd667"/><path d="M4 19V11H16V19H13V15H7V19Z" fill="#3d96dc"/></svg></button>
    <button class="run" aria-label="WhatsApp"><svg width="24" height="24" viewBox="0 0 24 24"><path d="M3 20L4 15A9 9 0 1 1 8 19Z" fill="#f2e8e8" stroke="#1d8a4a" stroke-width="2"/><path d="M8 6L10 9L9 10Q10 13 13 14L14 12L16 13Q15 16 13 16Q7 14 7 8Z" fill="#1d8a4a"/></svg><em>8</em></button>
    <button class="run" aria-label="Chrome profile"><svg width="22" height="22" viewBox="0 0 22 22"><use href="#chrome" width="20" height="20"/><circle cx="16" cy="16" r="5.500" fill="#111"/><path d="M16 12V19M14 14L16 16" stroke="#555"/></svg></button>
    <button aria-label="Database tool"><svg width="20" height="22" viewBox="0 0 20 22"><path d="M1 13V18Q10 24 19 18V13" fill="#08a5a5" stroke="#000"/><path d="M1 16Q10 21 19 16" fill="none" stroke="#000" stroke-width="1.500"/><ellipse cx="10" cy="13" rx="9" ry="3.500" fill="#19c7c0" stroke="#000"/><path d="M8 1H12V5H16V9H12V13H8V9H4V5H8Z" fill="#ffee1a" stroke="#000"/></svg></button>
    <button class="run active" aria-label="Power BI"><svg width="20" height="22" viewBox="0 0 20 22"><rect width="20" height="22" rx="1" fill="#0a7ad4"/><path d="M11 4H15V18H11Z" fill="#f0b51c"/><path d="M8 8H12V18H8Z" fill="#f7cf3c"/><path d="M5 12H9V18H5Z" fill="#fbe27a"/></svg></button>
    <button aria-label="Python"><svg width="20" height="22" viewBox="0 0 20 22"><path d="M2 1H11L15 5V20H2Z" fill="#f5f5f5" stroke="#c9c9c9"/><path d="M9 10Q9 7 13 8Q16 8 15 13H11Q9 13 9 16Q6 15 7 12Z" fill="#3873a6"/><path d="M18 12Q19 16 16 18Q16 21 12 20Q9 19 10 15H14Q16 14 16 11Z" fill="#f7cd45"/></svg></button>
    <button aria-label="Tableau"><svg width="20" height="20" viewBox="0 0 20 20"><rect width="20" height="20" fill="#fff"/><path d="M10 6V14M6 10H14M10 1V4M8.500 2.500H11.500M10 16V19M8.500 17.500H11.500M4 3V7M2 5H6M16 3V7M14 5H18M4 13V17M2 15H6M16 13V17M14 15H18M1 10H4M16 10H19" stroke="#4d86aa" stroke-width="1.200"/></svg></button>
    <button aria-label="Chrome"><svg width="20" height="22"><use href="#chrome"/></svg></button>
    <button aria-label="MySQL Workbench"><svg width="20" height="22" viewBox="0 0 20 22"><rect width="20" height="22" rx="2" fill="#2b6488"/><path d="M4 18Q2 5 7 5Q13 5 14 11Q15 15 18 17M8 8L10 14M12 3L15 3L18 7" fill="none" stroke="#c7dce8" stroke-width="1.100"/></svg></button>
    <button aria-label="WPS Office"><svg width="20" height="22" viewBox="0 0 20 22"><rect width="20" height="22" rx="2" fill="#ff1f2d"/><path d="M3 7H17L13.500 15L10 8L7 15L3.500 7" fill="none" stroke="#fff" stroke-width="1.800"/></svg></button>
  </div>
  <div class="tray">
    <button class="weather"><span class="wicon"><svg width="20" height="20" viewBox="0 0 20 20"><path d="M4 18Q0 17 1 13Q2 10 5 10Q7 5 12 6Q16 7 16 11Q20 12 19 15.500Q18 18 16 18Z" fill="#8fb8f0"/><path d="M4 18Q0 17 1 14Q8 13 19 15.500Q18 18 16 18Z" fill="#c4dafa"/></svg><em>2</em></span>28°C&nbsp; Cloudy</button>
    <button aria-label="Show hidden icons"><svg width="12" height="12" viewBox="0 0 12 12"><path d="M1 8.500L6 3.500L11 8.500" fill="none" stroke="#222" stroke-width="1.200"/></svg></button>
    <button aria-label="OneDrive"><svg width="14" height="14" viewBox="0 0 14 14"><path d="M3 11Q0 9 2 7Q3 4 6 4Q10 2 11 6Q14 7 13 10Q12 11 10 11ZM1 1L13 13" fill="none" stroke="#222" stroke-width="1.200"/></svg></button>
    <button aria-label="Update"><svg width="14" height="16" viewBox="0 0 14 16"><path d="M1 2H13V13H1ZM10 0V4M9 8Q9 5 6 5T3 8Q4 11 7 10" fill="none" stroke="#222" stroke-width="1.200"/><circle cx="10" cy="12" r="3.200" fill="#f49a1a"/></svg></button>
    <button aria-label="Battery"><svg width="14" height="12" viewBox="0 0 14 12"><path d="M3 3H13V10H3ZM0 3H4M2 0V6" fill="none" stroke="#111" stroke-width="1.300"/><path d="M3 3H7V9H4Z" fill="#111"/></svg></button>
    <button aria-label="Volume"><svg width="15" height="14" viewBox="0 0 15 14"><path d="M1 5H3L6 2V12L3 9H1ZM8 5Q9 7 8 9M10 3.500Q12 7 10 10.500M12 2Q15 7 12 12" fill="none" stroke="#222"/></svg></button>
    <button aria-label="Network"><svg width="13" height="13" viewBox="0 0 13 13"><path d="M1 12Q1 2 12 1M4 12Q4 5 12 4M7 12Q7 8 12 7" fill="none" stroke="#999" stroke-width="1.100"/><path d="M9 12Q9 10 12 10" fill="none" stroke="#222" stroke-width="1.400"/></svg></button>
    <button>ENG</button>
    <button class="clock">12:24<br>19-10-2025</button>
    <button class="note" aria-label="Notifications"><svg width="16" height="16" viewBox="0 0 16 16"><path d="M1 1H14V11H7L4 15V11H1Z" fill="#000"/><path d="M3 4H12M3 7H10" stroke="#fff"/></svg><em>6</em></button>
  </div>
</div>
</body>
</html>
```
FILE: styles.css
```css
:root { --ui: "Open Sans", "Noto Sans", sans-serif; --slim: Roboto, sans-serif; --serif: "Liberation Serif", serif; --green: #117865; --blue: #5a7c99; }
* { box-sizing: border-box; }
body { margin: 0; min-height: 100vh; display: grid; grid-template-rows: auto auto 1fr auto auto; font: 10px/13px var(--ui); color: #252423; background: #f3f2f1; overflow: hidden; }
h1, h2, h3, p, ul { margin: 0; padding: 0; font-weight: 400; }
button, input { font: inherit; color: inherit; border: 0; padding: 0; margin: 0; background: none; }
i, em { font-style: normal; }
svg { display: block; flex: none; }
.defs { position: absolute; width: 0; height: 0; }

.titlebar { position: relative; height: 29px; background: #3b3a38; color: #fff; display: grid; grid-template-columns: 553fr 334fr 393fr; align-items: center; font-family: var(--slim); }
.strip { position: absolute; top: 0; left: 539px; width: 201px; height: 1px; background: linear-gradient(90deg, #2b6ea5 40px, #e8f4ef 40px); }
.quick { display: flex; gap: 12px; padding-left: 13px; align-items: center; }
.filename { display: flex; align-items: center; gap: 6px; white-space: nowrap; margin-left: -7px; padding-top: 2px; }
.topsearch { display: flex; align-items: center; gap: 9px; height: 20px; padding-left: 14px; background: #d4d4d4; color: #3b3a38; border-radius: 2px; font-family: var(--ui); }
.topsearch input { font-size: 11px; flex: 1; min-width: 0; }
.topsearch input::placeholder { color: #2f5c50; }
.account { display: flex; align-items: center; justify-content: flex-end; padding-right: 13px; }
.account > svg { margin: 0 26px 0 8px; }
.account button + button { margin-left: 26px; }

.ribbon { background: #fafafa; font-family: var(--slim); box-shadow: 0 1px 2px #cfcdcb; position: relative; z-index: 1; }
.tabs { display: flex; align-items: center; gap: 26px; height: 28px; padding: 0 5px 0 19px; font-size: 12px; }
.tabs > button { height: 22px; padding-bottom: 2px; border-bottom: 2px solid transparent; }
.tabs .t-file { margin-right: 5px; }
.tabs .on { font-weight: 600; border-color: var(--green); }
.tabs .share { display: flex; align-items: center; gap: 6px; margin-left: auto; height: 20px; padding: 0 6px; background: var(--green); color: #fff; border: 0; border-radius: 3px; font-size: 11px; }
.groups { display: flex; height: 76px; }
.group { display: flex; flex-direction: column; border-right: 1px solid #e1dfdd; margin-top: 1px; }
.group > p { text-align: center; font-size: 9px; line-height: 10px; }
.tools { flex: 1; display: grid; justify-content: center; padding-top: 5px; align-items: start; }
.g-clip { width: 134px; } .g-clip .tools { grid-template-columns: 36px 86px; }
.g-data { width: 300px; } .g-data .tools { grid-template-columns: 36px 44px 48px 32px 35px 44px 50px; }
.g-query { width: 96px; } .g-query .tools { grid-template-columns: 48px 36px; }
.g-insert { width: 122px; } .g-insert .tools { grid-template-columns: 30px 37px 38px; }
.g-calc { width: 156px; } .g-calc .tools { grid-template-columns: 60px 42px 41px; }
.g-sens { width: 61px; } .g-share { width: 49px; }
.g-cop { width: 110px; } .g-cop .tools { grid-template-columns: 62px 34px; }
.tool { display: flex; flex-direction: column; align-items: center; white-space: nowrap; min-width: 0; }
.tool > svg { margin-bottom: 3px; }
.tool span { display: flex; align-items: center; gap: 2px; min-height: 13px; }
.tool span svg { width: 6px; height: 4px; margin-top: 3px; }
.off { color: #b3b0ad; }
.stack { display: grid; gap: 6px; padding-left: 3px; }
.stack button { display: flex; align-items: center; gap: 3px; height: 14px; color: #b8b6b4; white-space: nowrap; }
.collapse { margin: auto 4px 3px auto; }

.work { display: grid; grid-template-columns: 34px 1fr 150px 151px; min-height: 0; }
.rail { display: flex; flex-direction: column; border-right: 1px solid #e1dfdd; }
.rail button { height: 33px; display: flex; align-items: center; justify-content: center; border-left: 2px solid transparent; }
.rail .on { border-color: var(--green); }
.mini { font: 6px "Liberation Sans", sans-serif; fill: #605e5c; }

.canvas { background: #fff; display: flex; flex-direction: column; min-width: 0; }
.page { position: relative; flex: 1; margin: 0 25px 0 24px; display: flex; flex-direction: column; background: linear-gradient(90deg, #b0c2e8, #b9b2e4 50%, #c49be0); box-shadow: 0 0 5px #bbb; isolation: isolate; clip-path: inset(0 -6px); }
.page::before { content: ""; position: absolute; inset: 0; z-index: -1; background: linear-gradient(90deg, #e8d2f0, #d5d1ee 35%, #b8cfea 75%, #b0d2ec); -webkit-mask-image: linear-gradient(#000 5%, transparent 90%); mask-image: linear-gradient(#000 5%, transparent 90%); }
.pagehead { height: 36px; display: grid; grid-template-columns: 318px 80px 1fr 103px; column-gap: 8px; align-items: center; padding: 0 21px 0 14px; }
.pagehead h1 { font-size: 14px; line-height: 20px; padding-bottom: 8px; white-space: nowrap; }
.pagehead button { height: 26px; border-radius: 6px; }
.openf { background: #fff; font-weight: 600; }
.light { background: #dfe4ea; color: #605e5c; font-size: 9px; }
.moon { margin-bottom: 4px; justify-self: end; }
.panel { flex: 1; margin: 0 11px 13px; padding: 13px 7px 10px 6px; border-radius: 14px; background: #e4eaf5; display: grid; grid-template-columns: 217fr 361fr 270fr; grid-template-rows: 108px 1fr; gap: 8px 6px; min-width: 0; }
.card { background: #fff; border-radius: 16px; min-width: 0; }
.kpis { grid-column: 1 / -1; display: grid; grid-template-columns: repeat(6, 1fr); padding: 10px 11px 0 27px; }
.kpis h2 { font-size: 11px; line-height: 18px; color: #605e5c; }
.kpis output { display: block; font: 28px/42px "DejaVu Sans Mono", monospace; padding-top: 1px; color: #7b8b99; white-space: nowrap; }
.kpis p { font: 10px/14px Roboto, sans-serif; white-space: nowrap; }
.kpis b { font-size: 9px; font-weight: 500; color: #777; }
.kpis .strong b { color: #222; }

.mapcard { display: flex; flex-direction: column; padding: 18px 1px 0 3px; overflow: hidden; }
.switch { display: grid; grid-template-columns: 1fr 1fr; gap: 6px; padding: 0 5px 0 2px; }
.switch button { height: 34px; text-align: left; padding-left: 9px; }
.city { background: #666; color: #fff; font: 700 14px Roboto, sans-serif; }
.state { background: #e6e6e6; color: #111; font: 700 11px "DejaVu Sans", sans-serif; }
h3 { font-family: var(--serif); text-align: center; white-space: nowrap; }
.mapcard h3 { font-size: 13px; line-height: 16px; padding: 9px 0 2px; color: #605e5c; }
.map { width: 100%; height: 100%; flex: 1; min-height: 0; }
.places text { font: 25px Roboto, sans-serif; fill: #777; stroke: #fff; stroke-width: 4px; paint-order: stroke; }
.places text.big { font-size: 30px; }
.places text.uk { font-size: 36px; fill: #a0a0a0; }
.places text.isle { font-size: 19px; fill: #b5b5b5; }
.places text.copy { font-size: 9px; fill: #333; stroke: none; }

.middle { display: grid; grid-template-rows: 163fr 144fr; gap: 9px; min-width: 0; }
.proc { display: flex; flex-direction: column; padding: 0 6px 10px 7px; }
.proc h3 { font-size: 12px; line-height: 13px; }
.cols { flex: 1; display: grid; grid-template-columns: repeat(5, 56px); justify-content: space-between; align-items: end; text-align: center; font: 9px/11px var(--slim); color: #605e5c; }
.cols > div { display: flex; flex-direction: column; align-items: center; gap: 2px; }
.cols i { width: 100%; background: var(--blue); }
.cols .in { color: #fff; font-weight: 500; }
.cols .in i { padding-top: 6px; white-space: nowrap; display: flex; justify-content: center; }
.diag { padding: 7px 5px 0 11px; }
.diag h3 { font-size: 11px; line-height: 16px; }
.rows { display: grid; grid-template-columns: 49px 1fr; gap: 4px 7px; padding-top: 12px; font: 9px/13px var(--slim); color: #605e5c; text-align: right; }
.rows span { display: flex; justify-content: flex-end; white-space: nowrap; }
.rows div { display: flex; height: 13px; text-align: center; color: #fff; font-weight: 500; }
.e { background: #5a7c99; } .n { background: #766b82; } .o { background: #7fa9d3; }
.legend { display: flex; justify-content: center; gap: 5px; padding: 11px 0 0 0; font: 9px/13px var(--slim); color: #605e5c; }
.legend span { display: flex; align-items: center; gap: 1px; }
.legend i { width: 7px; height: 7px; border-radius: 50%; }
.dept { padding: 0 11px 0 18px; }
.dept h3 { font-size: 14px; line-height: 14px; text-align: right; padding: 0 2px 14px 0; }
.drow { height: 57px; font: 9px/12px var(--slim); color: #605e5c; }
.drow p { padding: 0 0 5px 6px; }
.drow div { display: flex; align-items: center; gap: 6px; height: 22px; }
.drow i { height: 22px; line-height: 22px; background: var(--blue); color: #fff; font-weight: 500; text-align: right; padding-right: 5px; }

.sheets { display: flex; align-items: stretch; height: 31px; background: #f3f2f1; border-bottom: 1px solid #e1dfdd; }
.view { width: 20px; margin: 0 8px 4px; display: flex; align-items: center; justify-content: center; border-bottom: 2px solid transparent; }
.view.on { border-color: var(--green); }
.nudge { width: 17px; display: flex; align-items: center; justify-content: center; }
.sheet { width: 61px; background: #fff; border-right: 1px solid #e1dfdd; border-bottom: 3px solid transparent; }
.sheet.on { border-bottom-color: var(--green); border-left: 1px solid #999; }
.sheet.wide { width: 83px; }
.add { width: 33px; background: var(--green); color: #fff; font-size: 16px; font-weight: 700; }

.viz, .data { border-left: 1px solid #e1dfdd; min-width: 0; }
.phead { display: flex; justify-content: space-between; align-items: center; height: 34px; padding: 0 6px; }
.phead h2 { font-size: 12px; font-weight: 600; line-height: 16px; }
.build { padding-left: 6px; font-weight: 600; line-height: 10px; }
.modes { display: flex; gap: 28px; padding: 5px 6px 0; }
.modes button { width: 27px; height: 26px; display: flex; align-items: center; justify-content: center; }
.modes .on { background: #d2d0ce; border-radius: 2px; }
.notch { margin-top: 2px; }
.vgrid { display: grid; grid-template-columns: repeat(6, 16px); justify-content: space-between; row-gap: 7px; padding: 10px 8px 6px; }
.vgrid button, .vgrid svg { width: 16px; height: 16px; }
.vgrid svg { overflow: visible; }
.custom { margin: 0 5px; padding: 7px 3px; border-top: 1px dashed #d2d0ce; }
.b { fill: #7cc0f4; stroke: #2b78b4; } .g { fill: #d2d0ce; stroke: #605e5c; } .k { fill: none; stroke: #484644; } .l { fill: none; stroke: #2b88d8; }
.num { font: 7px Roboto, sans-serif; fill: #2b78b4; }
.vgrid .word { font: 700 12px/16px Roboto, sans-serif; color: #2b78b4; }
.wells { border-top: 1px solid #e1dfdd; padding-top: 8px; }
.wells > p { padding-left: 9px; }
.wells .semi { padding: 9px 0 4px 9px; font-weight: 500; }
.well { margin: 4px 4px 0 3px; height: 23px; line-height: 21px; padding-left: 8px; background: #fff; border: 1px dashed #c8c6c4; white-space: nowrap; }
.well.drill { padding-left: 6px; height: 21px; line-height: 19px; }
.tog { display: flex; align-items: center; justify-content: space-between; height: 22px; padding: 0 17px 0 9px; }
.sw { position: relative; width: 27px; height: 13px; }
.sw input { position: absolute; inset: 0; width: 27px; height: 13px; appearance: none; border: 1px solid #8a8886; border-radius: 7px; background: radial-gradient(circle at 6px 50%, #484644 3px, transparent 4px) #fff; }
.sw input:checked { border-color: var(--green); background: radial-gradient(circle at 19px 50%, #fff 3px, transparent 4px) var(--green); }
.sw em { position: absolute; right: 3px; top: 0; font: 8px/13px var(--slim); color: #605e5c; }
.sw input:checked + em { right: auto; left: 4px; color: #fff; }
.dsearch { display: flex; align-items: center; gap: 5px; margin: 4px 3px 8px 4px; height: 20px; padding-left: 9px; background: #fff; border: 1px solid #c8c6c4; border-bottom-color: #777; border-radius: 3px; }
.dsearch input { flex: 1; min-width: 0; font-size: 11px; }
input::placeholder { color: #76716d; opacity: 1; }
.data ul { list-style: none; font-family: var(--slim); }
.data li { display: flex; align-items: center; height: 20px; padding-left: 12px; white-space: nowrap; }
.data .c { width: 7px; height: 11px; margin-right: 5px; }
.data .t { width: 12px; height: 12px; margin-right: 3px; }

.status { height: 19px; display: flex; align-items: center; justify-content: space-between; padding: 0 14px 0 3px; border-bottom: 1px solid #111; }
.zoom { display: flex; align-items: center; gap: 5px; }
.zoom span { padding: 0 12px 0 6px; color: #605e5c; }
.zoom input { width: 84px; height: 10px; appearance: none; background: linear-gradient(#8a8886, #8a8886) center / 100% 1px no-repeat; }
.zoom input::-webkit-slider-thumb { appearance: none; width: 4px; height: 10px; background: #555; }

.taskbar { height: 33px; display: flex; align-items: stretch; background: linear-gradient(90deg, #ddd3df, #ead8dc 25%, #f0e2d8 45%, #f2e8d8 60%, #ecdfdc 78%, #ead6da); color: #111; }
.taskbar button { display: flex; align-items: center; justify-content: center; position: relative; }
.start { width: 41px; }
.wsearch { width: 238px; display: flex; align-items: center; gap: 9px; padding-left: 9px; background: #fff; border: 1px solid #ddd; }
.wsearch input { flex: 1; min-width: 0; font-size: 12px; }
.wsearch input::placeholder { color: #333; }
.tview { width: 43px; }
.apps { display: grid; grid-template-columns: repeat(11, 1fr); width: 454px; }
.run::after { content: ""; position: absolute; left: 4px; right: 4px; bottom: 0; height: 2px; background: #0a74c8; }
.active { background: #faf4f2; }
.active::after { left: 0; right: 0; }
.taskbar em { position: absolute; display: flex; align-items: center; justify-content: center; border-radius: 50%; width: 12px; height: 12px; font-size: 9px; background: #dcd6d6; border: 1px solid #555; }
.run em { right: 4px; bottom: 4px; }
.tray { display: flex; margin-left: auto; padding-right: 17px; gap: 7px; }
.weather { font-size: 11px; gap: 6px; margin-right: 12px; white-space: nowrap; }
.wicon { position: relative; }
.taskbar .wicon em { top: -1px; right: -1px; width: 10px; height: 10px; font-size: 8px; background: #c5281c; border: 0; color: #fff; }
.taskbar .clock { display: block; text-align: center; line-height: 15px; padding: 0 8px 0 4px; }
.note em { right: -5px; bottom: 3px; }
```
